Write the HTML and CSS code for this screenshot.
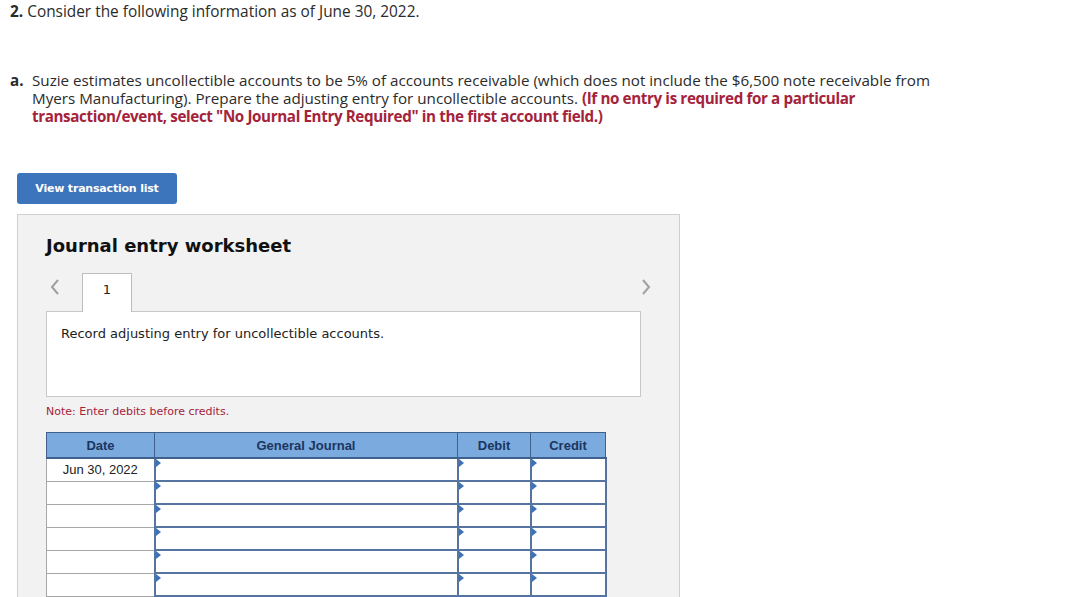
FILE: index.html
```html
<!DOCTYPE html>
<html lang="en">
<head>
    <meta charset="UTF-8">
    <title>Journal entry worksheet</title>
    <link rel="stylesheet" href="styles.css">
</head>
<body>

<div class="question">
    <p class="intro"><b>2.</b> Consider the following information as of June 30, 2022.</p>

    <div class="part">
        <span class="part-label">a.</span>
        <p>Suzie estimates uncollectible accounts to be 5% of accounts receivable (which does not include the $6,500 note receivable from Myers Manufacturing). Prepare the adjusting entry for uncollectible accounts. <strong class="hint">(If no entry is required for a particular transaction/event, select "No Journal Entry Required" in the first account field.)</strong></p>
    </div>

    <button class="btn-list">View transaction list</button>

    <div class="worksheet">
        <h2>Journal entry worksheet</h2>

        <div class="nav">
            <span class="chev">
                <svg width="10" height="16" viewBox="0 0 10 16"><path d="M8 1 L2 8 L8 15" fill="none" stroke="#a0a0a0" stroke-width="2"/></svg>
            </span>
            <div class="tab">1</div>
            <span class="chev chev-right">
                <svg width="10" height="16" viewBox="0 0 10 16"><path d="M2 1 L8 8 L2 15" fill="none" stroke="#a0a0a0" stroke-width="2"/></svg>
            </span>
        </div>

        <div class="desc">Record adjusting entry for uncollectible accounts.</div>

        <p class="note">Note: Enter debits before credits.</p>

        <table class="journal">
            <thead>
                <tr>
                    <th class="col-date">Date</th>
                    <th class="col-acct">General Journal</th>
                    <th class="col-debit">Debit</th>
                    <th class="col-credit">Credit</th>
                </tr>
            </thead>
            <tbody>
                <tr>
                    <td class="date">Jun 30, 2022</td>
                    <td class="entry"></td>
                    <td class="entry"></td>
                    <td class="entry"></td>
                </tr>
                <tr><td class="date"></td><td class="entry"></td><td class="entry"></td><td class="entry"></td></tr>
                <tr><td class="date"></td><td class="entry"></td><td class="entry"></td><td class="entry"></td></tr>
                <tr><td class="date"></td><td class="entry"></td><td class="entry"></td><td class="entry"></td></tr>
                <tr><td class="date"></td><td class="entry"></td><td class="entry"></td><td class="entry"></td></tr>
                <tr><td class="date"></td><td class="entry"></td><td class="entry"></td><td class="entry"></td></tr>
            </tbody>
        </table>
    </div>
</div>

</body>
</html>
```

FILE: styles.css
```css
body {
    margin: 0;
    background: #ffffff;
    font-family: "Open Sans", Arial, sans-serif;
    color: #2b2b2b;
}
.question {
    padding: 3px 10px 0 10px;
}
.intro {
    margin: 0;
    font-size: 15.4px;
    line-height: 18px;
}
.part {
    display: flex;
    margin-top: 50px;
    font-size: 15.2px;
    line-height: 18px;
    width: 945px;
}
.part-label {
    font-weight: bold;
    width: 22px;
    flex-shrink: 0;
}
.part p {
    margin: 0;
}
.hint {
    color: #a4233b;
    letter-spacing: -0.38px;
}
.btn-list {
    display: block;
    margin: 48px 0 0 7px;
    width: 160px;
    height: 31px;
    background: #3c75bc;
    color: #fff;
    border: none;
    border-radius: 3px;
    font-family: "DejaVu Sans", Verdana, sans-serif;
    font-size: 11px;
    font-weight: bold;
    letter-spacing: -0.2px;
    padding: 0;
}
.worksheet {
    margin: 10px 0 0 7px;
    width: 633px;
    height: 400px;
    background: #f2f2f2;
    border: 1px solid #cfcfcf;
    padding: 20px 0 0 28px;
    font-family: "DejaVu Sans", Verdana, sans-serif;
}
.worksheet h2 {
    margin: 0;
    font-size: 18px;
    line-height: 22px;
    color: #111;
}
.nav {
    display: flex;
    align-items: flex-start;
    margin-top: 16px;
    width: 605px;
}
.chev {
    width: 10px;
    margin: 6px 0 0 4px;
}
.chev-right {
    margin-left: auto;
}
.tab {
    width: 48px;
    height: 38px;
    margin-left: 22px;
    margin-bottom: -1px;
    position: relative;
    z-index: 1;
    background: #fff;
    border: 1px solid #bdbdbd;
    border-bottom: none;
    text-align: center;
    font-size: 13px;
    line-height: 32px;
    color: #222;
}
.desc {
    width: 565px;
    height: 70px;
    background: #fff;
    border: 1px solid #c8c8c8;
    padding: 14px 14px 0 14px;
    font-size: 13px;
    line-height: 16px;
    color: #222;
}
.note {
    margin: 8px 0 0 0;
    font-size: 11px;
    line-height: 14px;
    color: #a4233b;
}
.journal {
    margin-top: 13px;
    border-collapse: collapse;
    font-family: "Liberation Sans", Arial, sans-serif;
    font-size: 13px;
}
.journal th {
    background: #7aaade;
    color: #1c355e;
    font-weight: bold;
    height: 24px;
    padding: 0;
    border: 1px solid #3f5f8c;
    border-bottom: 2px solid #3f5f8c;
}
.col-date { width: 107px; }
.col-acct { width: 302px; }
.col-debit { width: 72px; }
.col-credit { width: 74px; }
.journal td {
    height: 21px;
    padding: 0;
    background: #fff;
}
.journal td.date {
    border: 1px solid #a6a6a6;
    text-align: center;
    color: #222;
}
.journal td.entry {
    position: relative;
    border: 2px solid #5574a0;
}
.journal td.entry::before {
    content: "";
    position: absolute;
    top: 0;
    left: 0;
    border-top: 4px solid transparent;
    border-bottom: 4px solid transparent;
    border-left: 5px solid #3d72b8;
}
```
